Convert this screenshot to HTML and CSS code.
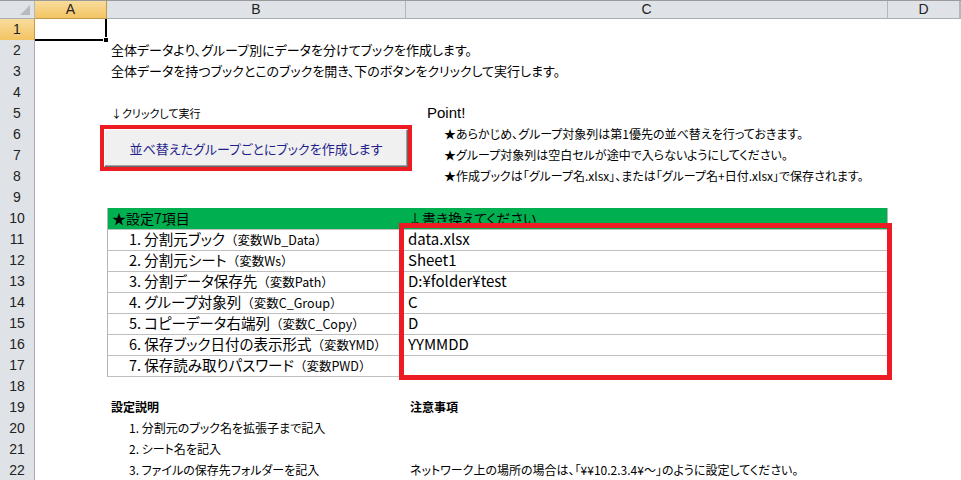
FILE: index.html
```html
<!DOCTYPE html>
<html>
<head>
	<meta charset="utf-8">
	<title>グループ別ブック作成</title>
	<link rel="stylesheet" href="styles.css">
</head>
<body>
	<div class="sheet">
		<div class="row head">
			<div class="corner"><span class="tri"></span></div>
			<div class="colhead active">A</div>
			<div class="colhead">B</div>
			<div class="colhead">C</div>
			<div class="colhead">D</div>
			<div class="colhead"></div>
		</div>

		<div class="row">
			<div class="rh active">1</div>
			<div class="cell selected"><span class="handle"></span></div>
		</div>
		<div class="row">
			<div class="rh">2</div><div class="cell"></div>
			<div class="cell big">全体データより、グループ別にデータを分けてブックを作成します。</div>
		</div>
		<div class="row">
			<div class="rh">3</div><div class="cell"></div>
			<div class="cell big">全体データを持つブックとこのブックを開き、下のボタンをクリックして実行します。</div>
		</div>
		<div class="row">
			<div class="rh">4</div>
		</div>
		<div class="row">
			<div class="rh">5</div><div class="cell"></div>
			<div class="cell tiny">↓クリックして実行</div>
			<div class="cell point">Point!</div>
		</div>
		<div class="row">
			<div class="rh">6</div><div class="cell"></div><div class="cell"></div>
			<div class="cell small indent">★あらかじめ、グループ対象列は第1優先の並べ替えを行っておきます。</div>
		</div>
		<div class="row">
			<div class="rh">7</div><div class="cell"></div><div class="cell"></div>
			<div class="cell small indent">★グループ対象列は空白セルが途中で入らないようにしてください。</div>
		</div>
		<div class="row">
			<div class="rh">8</div><div class="cell"></div><div class="cell"></div>
			<div class="cell small indent">★作成ブックは「グループ名.xlsx」、または「グループ名+日付.xlsx」で保存されます。</div>
		</div>
		<div class="row">
			<div class="rh">9</div><div class="cell"></div>
			<div class="cell tbl-top"></div><div class="cell tbl-top"></div>
		</div>
		<div class="row">
			<div class="rh">10</div><div class="cell"></div>
			<div class="cell tbl green first">★設定7項目</div>
			<div class="cell tbl green">↓書き換えてください</div>
		</div>
		<div class="row">
			<div class="rh">11</div><div class="cell"></div>
			<div class="cell tbl first item">1. 分割元ブック<small>（変数Wb_Data）</small></div>
			<div class="cell tbl value">data.xlsx</div>
		</div>
		<div class="row">
			<div class="rh">12</div><div class="cell"></div>
			<div class="cell tbl first item">2. 分割元シート<small>（変数Ws）</small></div>
			<div class="cell tbl value">Sheet1</div>
		</div>
		<div class="row">
			<div class="rh">13</div><div class="cell"></div>
			<div class="cell tbl first item">3. 分割データ保存先<small>（変数Path）</small></div>
			<div class="cell tbl value">D:¥folder¥test</div>
		</div>
		<div class="row">
			<div class="rh">14</div><div class="cell"></div>
			<div class="cell tbl first item">4. グループ対象列<small>（変数C_Group）</small></div>
			<div class="cell tbl value">C</div>
		</div>
		<div class="row">
			<div class="rh">15</div><div class="cell"></div>
			<div class="cell tbl first item">5. コピーデータ右端列<small>（変数C_Copy）</small></div>
			<div class="cell tbl value">D</div>
		</div>
		<div class="row">
			<div class="rh">16</div><div class="cell"></div>
			<div class="cell tbl first item">6. 保存ブック日付の表示形式<small>（変数YMD）</small></div>
			<div class="cell tbl value">YYMMDD</div>
		</div>
		<div class="row">
			<div class="rh">17</div><div class="cell"></div>
			<div class="cell tbl first item">7. 保存読み取りパスワード<small>（変数PWD）</small></div>
			<div class="cell tbl value"></div>
		</div>
		<div class="row">
			<div class="rh">18</div>
		</div>
		<div class="row">
			<div class="rh">19</div><div class="cell"></div>
			<div class="cell small bold">設定説明</div>
			<div class="cell small bold">注意事項</div>
		</div>
		<div class="row">
			<div class="rh">20</div><div class="cell"></div>
			<div class="cell small note">1. 分割元のブック名を拡張子まで記入</div>
		</div>
		<div class="row">
			<div class="rh">21</div><div class="cell"></div>
			<div class="cell small note">2. シート名を記入</div>
		</div>
		<div class="row">
			<div class="rh">22</div><div class="cell"></div>
			<div class="cell small note">3. ファイルの保存先フォルダーを記入</div>
			<div class="cell small">ネットワーク上の場所の場合は、「¥¥10.2.3.4¥～」のように設定してください。</div>
		</div>

		<!-- shapes drawn over the sheet -->
		<div class="button-frame">
			<button class="macro-button">並べ替えたグループごとにブックを作成します</button>
		</div>
		<div class="input-frame"></div>
	</div>
</body>
</html>
```

FILE: styles.css
```css
/* general */
* {
	box-sizing: border-box;
}
body {
	margin: 0;
	background: #fff;
	font-family: "Noto Sans CJK JP", "Liberation Sans", sans-serif;
	color: #000;
	overflow: hidden;
}
.sheet {
	position: relative;
	width: 961px;
	height: 480px;
}

/* grid rows */
.row {
	display: grid;
	grid-template-columns: 35px 72px 299px 482px 72px 1fr;
	height: 21px;
}
.row.head {
	height: 19px;
	border-top: 1px solid #9a9a9a;
}
.corner,
.colhead {
	background: #dfe2e6;
	border-right: 1px solid #b4b8bd;
	border-bottom: 1px solid #a9adb3;
	font-family: "Liberation Sans", sans-serif;
	font-size: 14px;
	line-height: 17px;
	text-align: center;
	color: #222;
}
.corner {
	position: relative;
}
.tri {
	position: absolute;
	right: 4px;
	bottom: 3px;
	border-left: 10px solid transparent;
	border-bottom: 10px solid #b7bbc0;
}
.rh {
	background: #dfe2e6;
	border-right: 1px solid #a9adb3;
	border-bottom: 1px solid #c3c7cc;
	font-family: "Liberation Sans", sans-serif;
	font-size: 14px;
	line-height: 21px;
	text-align: center;
	color: #222;
}
.colhead.active,
.rh.active {
	background: linear-gradient(#f9dc9c, #f3c463);
	border-color: #c29a4a;
}

/* cells */
.cell {
	white-space: nowrap;
	line-height: 20px;
	font-feature-settings: "palt";
}
.cell.selected {
	position: relative;
	border-right: 2px solid #000;
	border-bottom: 2px solid #000;
}
.handle {
	position: absolute;
	right: -4px;
	bottom: -4px;
	width: 6px;
	height: 6px;
	background: #000;
	border: 1px solid #fff;
}
.big {
	font-size: 13px;
	padding-left: 4px;
}
.small {
	font-size: 12px;
	padding-left: 4px;
}
.tiny {
	font-size: 11px;
	padding-left: 4px;
}
.indent {
	padding-left: 38px;
}
.note {
	padding-left: 22px;
}
.bold {
	font-weight: bold;
}
.point {
	font-family: "Liberation Sans", sans-serif;
	font-size: 15px;
	padding-left: 21px;
}

/* settings table */
.tbl-top {
	border-bottom: 1px solid #b3b3b3;
}
.tbl {
	border-bottom: 1px solid #bfbfbf;
	font-size: 15px;
}
.tbl.first {
	border-left: 1px solid #b3b3b3;
}
.tbl:not(.first) {
	border-right: 1px solid #b3b3b3;
}
.green {
	background: #00b050;
	font-size: 14px;
	padding-left: 4px;
}
.tbl.green:not(.first) {
	padding-left: 2px;
}
.item {
	padding-left: 21px;
	font-size: 14.5px;
}
.item small {
	font-size: 12.5px;
	font-feature-settings: normal;
}
.value {
	padding-left: 2px;
}

/* shapes */
.button-frame {
	position: absolute;
	left: 100px;
	top: 125px;
	width: 312px;
	height: 46px;
	border: 4px solid #ed1c24;
}
.macro-button {
	display: block;
	width: 100%;
	height: 100%;
	margin: 0;
	padding: 0;
	background: #f0f0f0;
	border: 1px solid;
	border-color: #fff #6a6a6a #6a6a6a #fff;
	box-shadow: inset -1px -1px 0 #a0a0a0;
	font-family: "Noto Sans CJK JP", sans-serif;
	font-feature-settings: "palt";
	font-size: 13px;
	color: #1f1f8c;
}
.input-frame {
	position: absolute;
	left: 399px;
	top: 223px;
	width: 493px;
	height: 157px;
	border: 5px solid #ed1c24;
}
```
